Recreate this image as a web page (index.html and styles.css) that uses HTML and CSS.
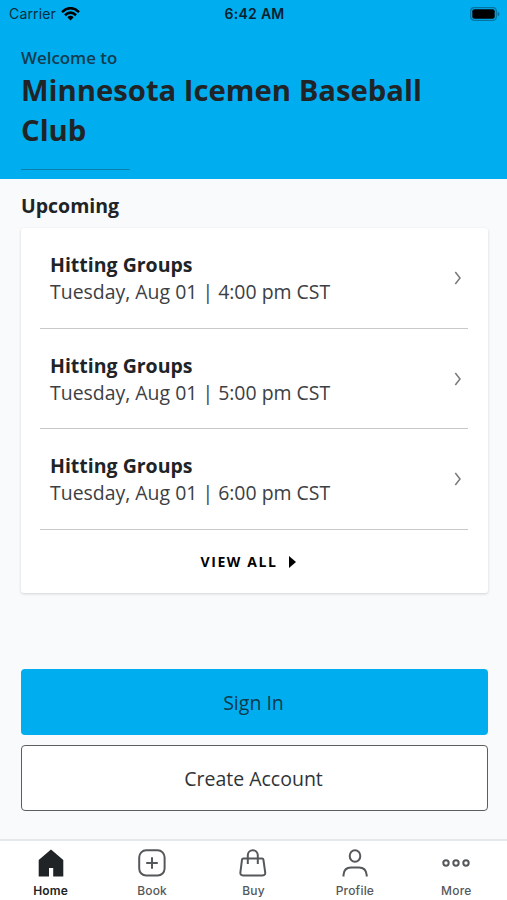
FILE: index.html
```
<!DOCTYPE html>
<html lang="en">
<head>
<meta charset="utf-8">
<title>Minnesota Icemen Baseball Club</title>
<link rel="stylesheet" href="styles.css">
</head>
<body>
<div class="app">
  <header class="hero">
    <div class="status">
      <div class="carrier"><span>Carrier</span>
        <svg width="19" height="14" viewBox="0 0 19 14" fill="none" stroke="#000" stroke-width="2.6"><path d="M1 5.1Q9.500-2.700 18 5.100M4 8.200Q9.500 3.100 15 8.200"/><path d="M9.500 13.500L6.300 10.200Q9.500 7.500 12.700 10.200Z" fill="#000" stroke="none"/></svg>
      </div>
      <span class="time">6:42 AM</span>
      <svg class="battery" width="30" height="14" viewBox="0 0 30 14"><rect x=".7" y=".7" width="25.600" height="12.600" rx="3.500" fill="none" stroke="#075f85" stroke-opacity=".75" stroke-width="1.200"/><rect x="2.300" y="2.300" width="22.400" height="9.400" rx="2" fill="#000"/><path d="M27.600 4.500Q29.500 5.500 29.500 7T27.600 9.500Z" fill="#066f9c"/></svg>
    </div>
    <p class="welcome">Welcome to</p>
    <h1>Minnesota Icemen Baseball Club</h1>
    <div class="rule"></div>
  </header>
  <main>
    <h2>Upcoming</h2>
    <section class="card">
      <div class="row"><div><h3>Hitting Groups</h3><p>Tuesday, Aug 01 | 4:00 pm CST</p></div><svg class="chev" width="8" height="14" viewBox="0 0 8 14"><path d="M1.300 1L6 7L1.300 13"/></svg></div>
      <div class="row"><div><h3>Hitting Groups</h3><p>Tuesday, Aug 01 | 5:00 pm CST</p></div><svg class="chev" width="8" height="14" viewBox="0 0 8 14"><path d="M1.300 1L6 7L1.300 13"/></svg></div>
      <div class="row"><div><h3>Hitting Groups</h3><p>Tuesday, Aug 01 | 6:00 pm CST</p></div><svg class="chev" width="8" height="14" viewBox="0 0 8 14"><path d="M1.300 1L6 7L1.300 13"/></svg></div>
      <div class="all"><span>VIEW ALL</span><svg width="7" height="12" viewBox="0 0 7 12"><path d="M0 0L7 6L0 12Z"/></svg></div>
    </section>
    <div class="actions">
      <div class="btn primary">Sign In</div>
      <div class="btn outline">Create Account</div>
    </div>
  </main>
  <nav>
    <div class="tab active"><svg width="30" height="30" viewBox="0 0 30 30"><path d="M15 1.500L27.300 12V28.500H17.200V20H13V28.500H2.700V12Z" fill="#202427"/></svg><span>Home</span></div>
    <div class="tab"><svg class="line" width="30" height="30" viewBox="0 0 30 30"><rect x="2.200" y="2.300" width="25.400" height="25.200" rx="7"/><path d="M15 9.200V20.800M9.200 15H20.800"/></svg><span>Book</span></div>
    <div class="tab"><svg class="line" width="30" height="30" viewBox="0 0 30 30"><path d="M5.300 10.500H24.100Q25.200 10.500 25.400 11.600L27.200 24.400Q27.500 27.500 24.600 27.500H5Q2.100 27.500 2.400 24.400L4 11.600Q4.200 10.500 5.300 10.500ZM9.800 16V7.300A5 5 0 0 1 19.800 7.300V16"/></svg><span>Buy</span></div>
    <div class="tab"><svg class="line" width="30" height="30" viewBox="0 0 30 30"><ellipse cx="15" cy="8" rx="5.300" ry="5.800"/><path d="M3.500 28.500V27Q4 19.500 11 19.500H19Q26 19.500 26.700 27V28.500"/></svg><span>Profile</span></div>
    <div class="tab"><svg class="line" width="30" height="30" viewBox="0 0 30 30"><circle cx="5" cy="15" r="2.700"/><circle cx="15" cy="15" r="2.700"/><circle cx="25" cy="15" r="2.700"/></svg><span>More</span></div>
  </nav>
</div>
</body>
</html>
```
FILE: styles.css
```
* { box-sizing: border-box; }
body, h1, h2, h3, p { margin: 0; }
body { font-family: "Open Sans", sans-serif; color: #202427; }
svg { display: block; flex: none; }
.app { width: 507px; height: 900px; display: flex; flex-direction: column; background: #f8fafc; overflow: hidden; }
.hero { height: 179px; background: #00aeef; flex: none; }
.status { height: 27px; padding: 0 7px 0 9px; display: grid; grid-template-columns: 1fr auto 1fr; align-items: center; font-family: Inter, sans-serif; font-size: 14px; color: #042d40; }
.carrier { display: flex; align-items: center; gap: 5px; }
.carrier span { letter-spacing: 0.15px; }
.time { font-weight: 600; color: #03212f; letter-spacing: 0.3px; }
.battery { justify-self: end; }
.welcome { margin: 19px 0 0 21px; font-size: 16.9px; line-height: 24px; font-weight: 600; color: #123c4f; }
h1 { margin-left: 21px; width: 440px; font-size: 29.25px; line-height: 40px; font-weight: 700; }
.rule { margin: 19px 0 0 21px; width: 109px; height: 1px; background: #0d7fae; }
main { flex: 1; padding: 13px 19px 0 21px; }
h2 { font-size: 19.5px; line-height: 27px; font-weight: 700; }
.card { margin-top: 9px; height: 365px; padding: 0 20px 0 19px; background: #fff; border-radius: 3px; box-shadow: 0 1px 3px rgba(0,0,0,.16); }
.row { height: 100.7px; padding: 0 6px 0 10px; display: flex; align-items: center; justify-content: space-between; border-bottom: 1px solid #c8c9ca; }
h3 { font-size: 19.5px; line-height: 27px; font-weight: 700; }
.row p { font-size: 19.45px; line-height: 27px; color: #3d4043; }
.chev { fill: none; stroke: #77797b; stroke-width: 1.5; }
.all { height: 63px; padding-right: 12px; display: flex; align-items: center; justify-content: center; gap: 11px; font-size: 14px; font-weight: 700; letter-spacing: 1.6px; color: #000; }
.actions { margin-top: 76px; display: flex; flex-direction: column; gap: 10px; }
.btn { height: 66px; padding-right: 2px; display: flex; align-items: center; justify-content: center; font-size: 19.5px; border-radius: 4px; }
.primary { background: #00aeef; color: #0c3a4c; }
.outline { background: #fff; border: 1.5px solid #5b5e60; color: #303336; }
nav { height: 61px; display: grid; grid-template-columns: repeat(5, 1fr); border-top: 2px solid #e5e8ea; background: #fff; }
.tab { display: flex; flex-direction: column; align-items: center; padding-top: 7px; font-family: Inter, sans-serif; font-size: 12px; line-height: 16px; font-weight: 500; color: #55585b; letter-spacing: .2px; }
.tab span { margin-top: 5px; }
.active { color: #202427; font-weight: 600; }
.line { fill: none; stroke: #55585b; stroke-width: 2; }
```
